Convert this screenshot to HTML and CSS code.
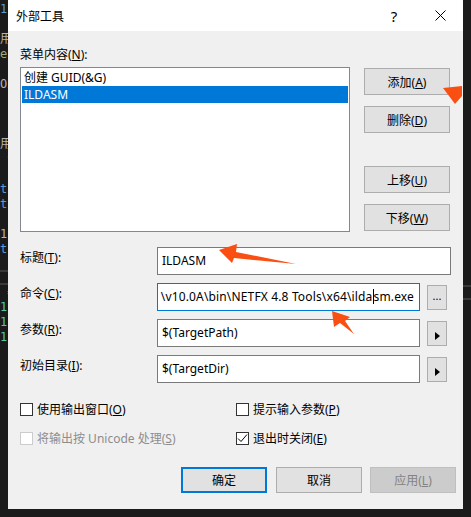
FILE: index.html
```html
<!DOCTYPE html>
<html lang="zh-CN">
<head>
<meta charset="utf-8">
<title>外部工具</title>
<link rel="stylesheet" href="styles.css">
</head>
<body>
<div class="screen">
  <div class="strip strip-left">
    <div class="code c-blue">1:</div>
    <div class="code"></div>
    <div class="code c-grey">用</div>
    <div class="code c-green">e:</div>
    <div class="code"></div>
    <div class="code c-grey">Ox</div>
    <div class="code c-grey">&nbsp;(</div>
    <div class="code"></div>
    <div class="code"></div>
    <div class="code c-grey">用</div>
    <div class="code c-blue">&nbsp;v</div>
    <div class="code"></div>
    <div class="code c-blue">t</div>
    <div class="code c-blue">t</div>
    <div class="code"></div>
    <div class="code c-grey">1:</div>
    <div class="code c-blue">t</div>
    <div class="code"></div>
    <div class="sep"></div>
    <div class="code c-grey">&nbsp;=</div>
    <div class="code c-teal">1:</div>
    <div class="code c-teal">1:</div>
    <div class="code c-teal">1:</div>
  </div>

  <div class="dialog">
    <div class="titlebar">
      <span class="title">外部工具</span>
      <span class="help">?</span>
      <span class="close">
        <svg width="11" height="11" viewBox="0 0 11 11"><path d="M0.5 0.5 L10.5 10.5 M10.5 0.5 L0.5 10.5" stroke="#000" stroke-width="1" fill="none"/></svg>
      </span>
    </div>

    <div class="body">
      <div class="top-label">菜单内容(<u>N</u>):</div>
      <div class="menu-row">
        <div class="listbox">
          <div class="item">创建 GUID(&amp;G)</div>
          <div class="item selected">ILDASM</div>
        </div>
        <div class="side-buttons">
          <button class="btn">添加(<u>A</u>)</button>
          <button class="btn">删除(<u>D</u>)</button>
          <button class="btn btn-gap">上移(<u>U</u>)</button>
          <button class="btn">下移(<u>W</u>)</button>
        </div>
      </div>

      <div class="fields">
        <div class="field-label">标题(<u>T</u>):</div>
        <div class="input input-wide">ILDASM</div>

        <div class="field-label">命令(<u>C</u>):</div>
        <div class="input input-focus"><span class="scroll-text">\v10.0A\bin\NETFX 4.8 Tools\x64\ilda<span class="caret"></span>sm.exe</span></div>
        <span></span>
        <button class="mini">...</button>

        <div class="field-label">参数(<u>R</u>):</div>
        <div class="input">$(TargetPath)</div>
        <span></span>
        <button class="mini"><span class="tri"></span></button>

        <div class="field-label">初始目录(<u>I</u>):</div>
        <div class="input">$(TargetDir)</div>
        <span></span>
        <button class="mini"><span class="tri"></span></button>
      </div>

      <div class="checks">
        <label class="check"><span class="box"></span><span>使用输出窗口(<u>O</u>)</span></label>
        <label class="check"><span class="box"></span><span>提示输入参数(<u>P</u>)</span></label>
        <label class="check disabled"><span class="box"></span><span>将输出按 Unicode 处理(<u>S</u>)</span></label>
        <label class="check"><span class="box checked"><svg width="11" height="11" viewBox="0 0 11 11"><path d="M1 5.5 L4 8.5 L10 1.5" stroke="#000" stroke-width="1" fill="none"/></svg></span><span>退出时关闭(<u>E</u>)</span></label>
      </div>

      <div class="actions">
        <button class="btn btn-default">确定</button>
        <button class="btn">取消</button>
        <button class="btn btn-disabled">应用(<u>L</u>)</button>
      </div>
    </div>
  </div>

  <div class="strip strip-right">
    <div class="sep sep-right"></div>
  </div>
</div>

<svg class="annot" width="471" height="517" viewBox="0 0 471 517">
  <polygon points="443,88 462,86 462,96 455,104" fill="#fa4f12"/>
  <polygon points="219,250 237,244 236,252 296,264 234,258 232,263" fill="#fa4f12"/>
  <polygon points="332,311 350,317 345,321 354,334 340,323 334,327" fill="#fa4f12"/>
</svg>
</body>
</html>
```

FILE: styles.css
```css
* { box-sizing: border-box; }

html, body {
  margin: 0;
  padding: 0;
  background: #1b1b1b;
}

body {
  width: 471px;
  height: 517px;
  overflow: hidden;
  position: relative;
  font-family: "Noto Sans", "Noto Sans CJK SC", sans-serif;
  font-size: 12px;
  color: #000;
}

u { text-decoration: underline; text-underline-offset: 1px; }

.screen {
  display: flex;
  height: 517px;
}

.strip {
  width: 8px;
  flex: none;
  overflow: hidden;
  background: #1b1b1b;
}

.strip-left {
  padding-top: 2px;
  display: flex;
  flex-direction: column;
}

.code {
  height: 15px;
  line-height: 15px;
  font-family: "DejaVu Sans Mono", monospace;
  font-size: 12px;
  white-space: nowrap;
}

.c-blue { color: #569cd6; }
.c-grey { color: #b4b4b4; }
.c-green { color: #9ab07a; }
.c-teal { color: #4ec9b0; }

.sep {
  height: 15px;
  border-top: 2px solid #3a3a3a;
  border-bottom: 2px solid #3a3a3a;
  margin-top: -2px;
}

.sep-right {
  margin-top: 285px;
}

.dialog {
  width: 455px;
  height: 509px;
  flex: none;
  background: #f0f0f0;
  display: flex;
  flex-direction: column;
}

.titlebar {
  height: 31px;
  background: #fff;
  display: flex;
  align-items: center;
  padding-left: 8px;
}

.title {
  flex: 1;
  font-size: 12px;
  padding-top: 1px;
}

.help {
  width: 14px;
  font-size: 15px;
  margin-right: 34px;
  text-align: center;
}

.close {
  width: 11px;
  height: 11px;
  margin-right: 17px;
  display: flex;
}

.body {
  padding: 16px 7px 0 12px;
  display: flex;
  flex-direction: column;
}

.top-label {
  line-height: 16px;
  height: 16px;
  margin-bottom: 4px;
}

.menu-row {
  display: flex;
  gap: 14px;
}

.listbox {
  width: 330px;
  height: 165px;
  border: 1px solid #828790;
  background: #fff;
  padding: 1px;
}

.item {
  height: 17px;
  line-height: 17px;
  padding-left: 2px;
}

.item.selected {
  background: #0078d7;
  color: #fff;
}

.side-buttons {
  display: flex;
  flex-direction: column;
  padding-top: 1px;
  gap: 11px;
}

.btn {
  width: 86px;
  height: 27px;
  border: 1px solid #adadad;
  background: #e1e1e1;
  font: inherit;
  color: #000;
  padding: 0;
}

.btn-gap { margin-top: 22px; }

.fields {
  margin-top: 15px;
  display: grid;
  grid-template-columns: 137px 263px 7px 24px;
  grid-auto-rows: 28px;
  row-gap: 8px;
}

.field-label {
  line-height: 16px;
  padding-top: 3px;
  white-space: nowrap;
}

.input {
  height: 28px;
  border: 1px solid #7a7a7a;
  background: #fff;
  padding: 0 4px 2px 4px;
  display: flex;
  align-items: center;
  overflow: hidden;
  white-space: nowrap;
}

.input-wide {
  grid-column: 2 / 5;
}

.input-focus {
  border-color: #0078d7;
  justify-content: flex-end;
  padding-right: 5px;
}

.scroll-text {
  flex: none;
  letter-spacing: 0.15px;
}

.caret {
  display: inline-block;
  width: 1px;
  height: 15px;
  background: #000;
  vertical-align: -3px;
}

.mini {
  width: 20px;
  height: 25px;
  align-self: center;
  border: 1px solid #adadad;
  background: #e1e1e1;
  padding: 0;
  font: inherit;
  font-size: 11px;
  line-height: 14px;
  display: flex;
  align-items: flex-end;
  justify-content: center;
  padding-bottom: 6px;
}

.mini .tri {
  width: 0;
  height: 0;
  border-top: 4px solid transparent;
  border-bottom: 4px solid transparent;
  border-left: 5px solid #000;
  margin-bottom: -1px;
}

.checks {
  margin-top: 20px;
  display: grid;
  grid-template-columns: 216px 1fr;
  grid-auto-rows: 13px;
  row-gap: 16px;
}

.check {
  display: flex;
  align-items: center;
  gap: 4px;
  white-space: nowrap;
  line-height: 13px;
}

.box {
  width: 13px;
  height: 13px;
  border: 1px solid #333;
  background: #fff;
  flex: none;
  display: flex;
  align-items: center;
  justify-content: center;
}

.check.disabled { color: #8d8d8d; }
.check.disabled .box { border-color: #cccccc; }

.actions {
  margin-top: 22px;
  display: flex;
  justify-content: flex-end;
  gap: 8px;
}

.actions .btn {
  height: 26px;
}

.btn-default {
  border: 2px solid #0078d7;
  margin-right: 1px;
}

.btn-disabled {
  background: #cccccc;
  border-color: #bfbfbf;
  color: #838383;
}

.annot {
  position: absolute;
  left: 0;
  top: 0;
  pointer-events: none;
}
```
